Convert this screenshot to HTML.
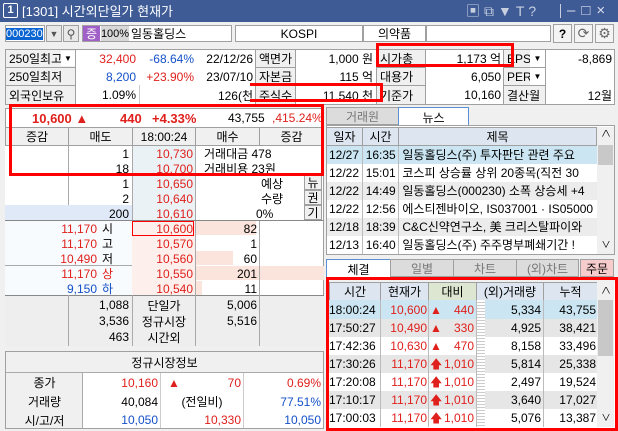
<!DOCTYPE html>
<html><head><meta charset="utf-8"><style>
*{margin:0;padding:0;box-sizing:border-box}
body{width:618px;height:431px;overflow:hidden;background:#f0f0f0;font-family:"Liberation Sans","Noto Sans CJK KR",sans-serif;font-size:12px;color:#000;position:relative}
div{position:absolute}
.c{white-space:nowrap;overflow:hidden;line-height:1}
.r{color:#e0201c}.b{color:#1450c8}
.bx{border:1px solid #a0a0a0}
.red{border:3px solid #f00}
.t{display:flex;align-items:center}
.jr{justify-content:flex-end;padding-right:3px}
.jc{justify-content:center}
.jl{justify-content:flex-start;padding-left:3px}
</style></head><body>
<!-- title -->
<div style="left:0;top:0;width:618px;height:22px;background:#3e5b96"></div>
<div style="left:3px;top:3px;width:15px;height:15px;border:1px solid #fff;border-radius:2px;color:#fff;font-size:11px;text-align:center;line-height:13px;font-weight:bold">1</div>
<div class="c" style="left:22px;top:5px;color:#fff;font-size:13px">[1301] 시간외단일가 현재가</div>
<div class="c" style="left:466px;top:4px;color:#c8d0e0;font-size:14px;letter-spacing:4px">▣⧉▼T?</div>
<div style="left:560px;top:4px;width:1px;height:14px;background:#c8d0e0"></div>
<div class="c" style="left:567px;top:3px;color:#dde;font-size:15px;letter-spacing:6px">–□×</div>
<!-- toolbar -->
<div class="bx t" style="left:5px;top:25px;width:40px;height:17px;background:#fff"><span style="background:#0a64d2;color:#fff;font-size:11px">000230</span></div>
<div class="bx t jc" style="left:46px;top:25px;width:16px;height:17px;background:#e8e8e8;font-size:9px;color:#555">▼</div>
<div class="bx t jc" style="left:63px;top:25px;width:16px;height:17px;background:#e8e8e8;color:#555">⚲</div>
<div class="bx" style="left:82px;top:25px;width:150px;height:17px;background:#fff"></div>
<div class="t jc" style="left:83px;top:26px;width:17px;height:15px;background:#a060c8;color:#fff">증</div>
<div class="t jc" style="left:101px;top:26px;width:28px;height:15px;background:#d8d8d8;font-size:11px">100%</div>
<div class="c" style="left:131px;top:28px">일동홀딩스</div>
<div class="bx t jc" style="left:235px;top:25px;width:128px;height:17px;background:#fff">KOSPI</div>
<div class="bx t jc" style="left:363px;top:25px;width:63px;height:17px;background:#fff">의약품</div>
<div class="bx" style="left:426px;top:25px;width:125px;height:17px;background:#fff"></div>
<div class="bx t jc" style="left:553px;top:24px;width:19px;height:19px;background:#f4f4f4;font-weight:bold">?</div>
<div class="bx t jc" style="left:574px;top:24px;width:19px;height:19px;background:#f4f4f4;color:#666;font-size:14px">⟳</div>
<div class="bx t jc" style="left:595px;top:24px;width:19px;height:19px;background:#f4f4f4;color:#666;font-size:14px">⚙</div>
<!-- info table -->
<div class="bx" style="left:5px;top:49px;width:610px;height:56px;background:#fff"></div>
<div class="bx t jl" style="left:5px;top:49px;width:71px;height:19px;background:#f0f0f0">250일최고</div>
<div class="t jc" style="left:61px;top:51px;width:14px;height:15px;background:#fff;font-size:8px">▼</div>
<div class="bx t jl" style="left:5px;top:67px;width:71px;height:19px;background:#f0f0f0">250일최저</div>
<div class="bx t jl" style="left:5px;top:85px;width:71px;height:20px;background:#f0f0f0">외국인보유</div>
<div class="t jr r" style="left:75px;top:49px;width:64px;height:19px">32,400</div>
<div class="t jr b" style="left:139px;top:49px;width:58px;height:19px">-68.64%</div>
<div class="t jr" style="left:197px;top:49px;width:59px;height:19px">22/12/26</div>
<div class="t jr b" style="left:75px;top:67px;width:64px;height:19px">8,200</div>
<div class="t jr r" style="left:139px;top:67px;width:58px;height:19px">+23.90%</div>
<div class="t jr" style="left:197px;top:67px;width:59px;height:19px">23/07/10</div>
<div class="t jr" style="left:75px;top:85px;width:64px;height:20px">1.09%</div>
<div style="left:139px;top:85px;width:1px;height:20px;background:#ccc"></div>
<div class="t jr" style="left:140px;top:85px;width:116px;height:20px">126(천</div>
<div class="bx t jl" style="left:255px;top:49px;width:41px;height:19px;background:#f0f0f0">액면가</div>
<div class="bx t jl" style="left:255px;top:67px;width:41px;height:19px;background:#f0f0f0">자본금</div>
<div class="bx t jl" style="left:255px;top:85px;width:41px;height:20px;background:#f0f0f0">주식수</div>
<div class="t jr" style="left:296px;top:49px;width:80px;height:19px">1,000 원</div>
<div class="t jr" style="left:296px;top:67px;width:80px;height:19px">115 억</div>
<div class="t jr" style="left:296px;top:85px;width:80px;height:20px">11,540 천</div>
<div class="bx t jl" style="left:376px;top:49px;width:50px;height:19px;background:#f0f0f0">시가총</div>
<div class="bx t jl" style="left:376px;top:67px;width:50px;height:19px;background:#f0f0f0">대용가</div>
<div class="bx t jl" style="left:376px;top:85px;width:50px;height:20px;background:#f0f0f0">기준가</div>
<div class="t jr" style="left:426px;top:49px;width:78px;height:19px">1,173 억</div>
<div class="t jr" style="left:426px;top:67px;width:78px;height:19px">6,050</div>
<div class="t jr" style="left:426px;top:85px;width:78px;height:20px">10,160</div>
<div class="bx t jl" style="left:503px;top:49px;width:43px;height:19px;background:#f0f0f0">EPS</div>
<div class="bx t jl" style="left:503px;top:67px;width:43px;height:19px;background:#f0f0f0">PER</div>
<div class="bx t jl" style="left:503px;top:85px;width:43px;height:20px;background:#f0f0f0">결산월</div>
<div class="t jc" style="left:530px;top:50px;width:15px;height:17px;background:#fff;font-size:8px">▼</div>
<div class="t jc" style="left:530px;top:68px;width:15px;height:17px;background:#fff;font-size:8px">▼</div>
<div class="t jr" style="left:545px;top:49px;width:70px;height:19px">-8,869</div>
<div class="t jr" style="left:545px;top:85px;width:70px;height:20px">12월</div>
<div class="red" style="left:376px;top:43px;width:138px;height:24px"></div>
<div class="red" style="left:250px;top:83px;width:133px;height:19px;border-left:none"></div>
<!-- orderbook -->
<div class="bx" style="left:5px;top:108px;width:319px;height:238px;background:#fff"></div>
<div class="c r" style="left:32px;top:112px;font-weight:bold;font-size:13px">10,600 ▲</div>
<div class="c r" style="left:120px;top:112px;font-weight:bold;font-size:13px">440</div>
<div class="c r" style="left:152px;top:112px;font-weight:bold;font-size:13px">+4.33%</div>
<div class="c" style="left:228px;top:112px">43,755</div>
<div class="c r" style="left:272px;top:112px">,415.24%</div>
<div class="bx t jc" style="left:5px;top:127px;width:64px;height:19px;background:#f0f0f0">증감</div>
<div class="bx t jc" style="left:68px;top:127px;width:65px;height:19px;background:#f0f0f0">매도</div>
<div class="bx t jc" style="left:132px;top:127px;width:64px;height:19px;background:#f0f0f0">18:00:24</div>
<div class="bx t jc" style="left:195px;top:127px;width:65px;height:19px;background:#f0f0f0">매수</div>
<div class="bx t jc" style="left:259px;top:127px;width:65px;height:19px;background:#f0f0f0">증감</div>
<div style="left:5px;top:146px;width:127px;height:74px;background:#fff"></div>
<div style="left:68px;top:146px;width:1px;height:74px;background:#aaa"></div>
<div style="left:132px;top:146px;width:63px;height:74px;background:#eaf2f6"></div>
<div style="left:5px;top:205px;width:127px;height:15px;background:#dfe9f7"></div>
<div style="left:132px;top:146px;width:1px;height:149px;background:#aaa"></div>
<div style="left:195px;top:146px;width:1px;height:149px;background:#aaa"></div>
<div class="t jr" style="left:68px;top:146px;width:64px;height:15px">1</div>
<div class="t jr" style="left:68px;top:161px;width:64px;height:15px">18</div>
<div class="t jr" style="left:68px;top:176px;width:64px;height:15px">1</div>
<div class="t jr" style="left:68px;top:191px;width:64px;height:15px">2</div>
<div class="t jr" style="left:68px;top:206px;width:64px;height:15px">200</div>
<div class="t jr r" style="left:132px;top:146px;width:64px;height:15px">10,730</div>
<div class="t jr r" style="left:132px;top:161px;width:64px;height:15px">10,700</div>
<div class="t jr r" style="left:132px;top:176px;width:64px;height:15px">10,650</div>
<div class="t jr r" style="left:132px;top:191px;width:64px;height:15px">10,640</div>
<div class="t jr r" style="left:132px;top:206px;width:64px;height:15px">10,610</div>
<div class="c" style="left:204px;top:148px">거래대금 478</div>
<div class="c" style="left:204px;top:163px">거래비용 23원</div>
<div class="c" style="left:261px;top:178px">예상</div>
<div class="c" style="left:261px;top:193px">수량</div>
<div class="c" style="left:256px;top:208px">0%</div>
<div class="bx t jc" style="left:304px;top:175px;width:18px;height:15px;background:#f0f0f0">뉴</div>
<div class="bx t jc" style="left:304px;top:190px;width:18px;height:15px;background:#f0f0f0">권</div>
<div class="bx t jc" style="left:304px;top:205px;width:18px;height:15px;background:#f0f0f0">기</div>
<div style="left:5px;top:220px;width:319px;height:1px;background:#888"></div>
<div style="left:5px;top:221px;width:127px;height:74px;background:#f8fbfe"></div>
<div style="left:5px;top:265px;width:127px;height:1px;background:#aaa"></div>
<div class="t jr r" style="left:5px;top:221px;width:95px;height:15px">11,170</div><div class="c" style="left:102px;top:223px">시</div>
<div class="t jr r" style="left:5px;top:236px;width:95px;height:15px">11,170</div><div class="c" style="left:102px;top:238px">고</div>
<div class="t jr r" style="left:5px;top:251px;width:95px;height:15px">10,490</div><div class="c" style="left:102px;top:253px">저</div>
<div class="t jr r" style="left:5px;top:266px;width:95px;height:15px">11,170</div><div class="c r" style="left:102px;top:268px">상</div>
<div class="t jr b" style="left:5px;top:281px;width:95px;height:15px">9,150</div><div class="c b" style="left:102px;top:283px">하</div>
<div style="left:132px;top:221px;width:63px;height:74px;background:#fdf0ec"></div>
<div style="left:196px;top:221px;width:60px;height:14px;background:#fbe4dc"></div>
<div style="left:196px;top:251px;width:37px;height:14px;background:#fbe4dc"></div>
<div style="left:196px;top:266px;width:128px;height:14px;background:#fbe4dc"></div>
<div style="left:196px;top:281px;width:6px;height:14px;background:#fbe4dc"></div>
<div style="left:259px;top:221px;width:1px;height:74px;background:#aaa"></div>
<div style="left:132px;top:221px;width:62px;height:15px;border:1px solid #f00"></div>
<div class="t jr r" style="left:132px;top:221px;width:64px;height:15px">10,600</div>
<div class="t jr r" style="left:132px;top:236px;width:64px;height:15px">10,570</div>
<div class="t jr r" style="left:132px;top:251px;width:64px;height:15px">10,560</div>
<div class="t jr r" style="left:132px;top:266px;width:64px;height:15px">10,550</div>
<div class="t jr r" style="left:132px;top:281px;width:64px;height:15px">10,540</div>
<div class="t jr" style="left:196px;top:221px;width:64px;height:15px">82</div>
<div class="t jr" style="left:196px;top:236px;width:64px;height:15px">1</div>
<div class="t jr" style="left:196px;top:251px;width:64px;height:15px">60</div>
<div class="t jr" style="left:196px;top:266px;width:64px;height:15px">201</div>
<div class="t jr" style="left:196px;top:281px;width:64px;height:15px">11</div>
<div style="left:5px;top:295px;width:319px;height:51px;background:#eeeeee;border-top:1px solid #888"></div>
<div style="left:68px;top:295px;width:1px;height:51px;background:#aaa"></div>
<div style="left:132px;top:295px;width:1px;height:51px;background:#aaa"></div>
<div style="left:195px;top:295px;width:1px;height:51px;background:#aaa"></div>
<div style="left:259px;top:295px;width:1px;height:51px;background:#aaa"></div>
<div class="t jr" style="left:68px;top:297px;width:64px;height:16px">1,088</div>
<div class="t jr" style="left:68px;top:313px;width:64px;height:16px">3,536</div>
<div class="t jr" style="left:68px;top:329px;width:64px;height:16px">463</div>
<div class="t jc" style="left:132px;top:297px;width:64px;height:16px">단일가</div>
<div class="t jc" style="left:132px;top:313px;width:64px;height:16px">정규시장</div>
<div class="t jc" style="left:132px;top:329px;width:64px;height:16px">시간외</div>
<div class="t jr" style="left:196px;top:297px;width:64px;height:16px">5,006</div>
<div class="t jr" style="left:196px;top:313px;width:64px;height:16px">5,516</div>
<div class="red" style="left:9px;top:104px;width:315px;height:72px"></div>
<!-- regular market -->
<div class="bx" style="left:5px;top:351px;width:319px;height:78px;background:#fff"></div>
<div class="t jc" style="left:6px;top:352px;width:317px;height:21px;background:#f0f0f0;border-bottom:1px solid #aaa">정규시장정보</div>
<div class="t jc" style="left:6px;top:373px;width:77px;height:55px;background:#f0f0f0;border-right:1px solid #aaa"></div>
<div class="t jc" style="left:6px;top:373px;width:77px;height:19px">종가</div>
<div class="t jc" style="left:6px;top:392px;width:77px;height:19px">거래량</div>
<div class="t jc" style="left:6px;top:411px;width:77px;height:18px">시/고/저</div>
<div style="left:160px;top:373px;width:1px;height:55px;background:#ccc"></div>
<div style="left:243px;top:373px;width:1px;height:55px;background:#ccc"></div>
<div class="t jr r" style="left:83px;top:373px;width:78px;height:19px">10,160</div>
<div class="c r" style="left:168px;top:377px">▲</div>
<div class="t jr r" style="left:160px;top:373px;width:84px;height:19px">70</div>
<div class="t jr r" style="left:243px;top:373px;width:81px;height:19px">0.69%</div>
<div class="t jr" style="left:83px;top:392px;width:78px;height:19px">40,084</div>
<div class="t jc" style="left:160px;top:392px;width:84px;height:19px">(전일비)</div>
<div class="t jr b" style="left:243px;top:392px;width:81px;height:19px">77.51%</div>
<div class="t jr b" style="left:83px;top:411px;width:78px;height:18px">10,050</div>
<div class="t jr r" style="left:160px;top:411px;width:84px;height:18px">10,330</div>
<div class="t jr b" style="left:243px;top:411px;width:81px;height:18px">10,050</div>
<!-- news -->
<div class="bx t jc" style="left:326px;top:107px;width:73px;height:18px;background:#dcdcdc;color:#777">거래원</div>
<div class="t jc" style="left:398px;top:107px;width:71px;height:19px;background:#fff;border:1px solid #5b8fd0;border-bottom:none">뉴스</div>
<div style="left:326px;top:125px;width:289px;height:130px;background:#fff;border:1px solid #a0a0a0"></div>
<div class="bx t jc" style="left:326px;top:127px;width:37px;height:19px;background:#dde6f0">일자</div>
<div class="bx t jc" style="left:362px;top:127px;width:37px;height:19px;background:#dde6f0">시간</div>
<div class="bx t jc" style="left:398px;top:127px;width:199px;height:19px;background:#dde6f0">제목</div>
<div style="left:597px;top:127px;width:17px;height:127px;background:#f0f0f0"></div>
<div class="c" style="left:601px;top:130px;font-size:10px">∧</div>
<div style="left:598px;top:145px;width:15px;height:20px;background:#c8c8c8"></div>
<div class="c" style="left:601px;top:241px;font-size:10px">∨</div>
<div style="left:327px;top:146px;width:270px;height:18px;background:#cbe6f2"></div>
<div style="left:327px;top:182px;width:270px;height:18px;background:#ececec"></div>
<div style="left:327px;top:218px;width:270px;height:18px;background:#ececec"></div>
<div style="left:362px;top:146px;width:1px;height:108px;background:#bbb"></div>
<div style="left:398px;top:146px;width:1px;height:108px;background:#bbb"></div>
<div class="c" style="left:329px;top:149px;width:268px">12/27 &nbsp;16:35 &nbsp;일동홀딩스(주) 투자판단 관련 주요</div>
<div class="c" style="left:329px;top:167px;width:268px">12/22 &nbsp;15:01 &nbsp;코스피 상승률 상위 20종목(직전 30</div>
<div class="c" style="left:329px;top:185px;width:268px">12/22 &nbsp;14:49 &nbsp;일동홀딩스(000230) 소폭 상승세 +4</div>
<div class="c" style="left:329px;top:203px;width:268px">12/22 &nbsp;12:56 &nbsp;에스티젠바이오, IS037001 · IS05000</div>
<div class="c" style="left:329px;top:221px;width:268px">12/18 &nbsp;18:39 &nbsp;C&amp;C신약연구소, 美 크리스탈파이와</div>
<div class="c" style="left:329px;top:239px;width:268px">12/13 &nbsp;16:40 &nbsp;일동홀딩스(주) 주주명부폐쇄기간 !</div>
<!-- bottom tabs -->
<div class="t jc" style="left:326px;top:259px;width:65px;height:19px;background:#fff;border:1px solid #5b8fd0;border-bottom:none">체결</div>
<div class="bx t jc" style="left:390px;top:259px;width:64px;height:18px;background:#dcdcdc;color:#777">일별</div>
<div class="bx t jc" style="left:453px;top:259px;width:64px;height:18px;background:#dcdcdc;color:#777">차트</div>
<div class="bx t jc" style="left:516px;top:259px;width:63px;height:18px;background:#dcdcdc;color:#777">(외)차트</div>
<div class="bx t jc" style="left:580px;top:259px;width:34px;height:18px;background:#f6cccc">주문</div>
<!-- trade table -->
<div style="left:329px;top:282px;width:286px;height:147px;background:#fff"></div>
<div class="bx t jc" style="left:329px;top:282px;width:52px;height:19px;background:#dde6f0">시간</div>
<div class="bx t jc" style="left:380px;top:282px;width:49px;height:19px;background:#dde6f0">현재가</div>
<div class="bx t jc" style="left:428px;top:282px;width:49px;height:19px;background:#dde6d0">대비</div>
<div class="bx t jc" style="left:476px;top:282px;width:68px;height:19px;background:#dde6f0">(외)거래량</div>
<div class="bx t jc" style="left:543px;top:282px;width:55px;height:19px;background:#dde6f0">누적</div>
<div style="left:597px;top:282px;width:17px;height:145px;background:#f0f0f0"></div>
<div class="c" style="left:601px;top:287px;font-size:10px">∧</div>
<div style="left:598px;top:300px;width:15px;height:56px;background:#c8c8c8"></div>
<div class="c" style="left:601px;top:414px;font-size:10px">∨</div>
<div style="left:329px;top:300px;width:268px;height:19px;background:#cbe6f2"></div>
<div style="left:329px;top:319px;width:268px;height:18px;background:#e6e6e6"></div>
<div style="left:329px;top:355px;width:268px;height:18px;background:#e6e6e6"></div>
<div style="left:329px;top:391px;width:268px;height:18px;background:#e6e6e6"></div>
<div style="left:477px;top:300px;width:8px;height:127px;background:repeating-linear-gradient(#fff 0 2px,#ccc 2px 3px)"></div>
<div style="left:380px;top:300px;width:1px;height:127px;background:#bbb"></div>
<div style="left:428px;top:300px;width:1px;height:127px;background:#bbb"></div>
<div style="left:476px;top:300px;width:1px;height:127px;background:#bbb"></div>
<div style="left:543px;top:300px;width:1px;height:127px;background:#bbb"></div>
<div id="rows"></div>
<div class="c" style="left:329px;top:304px;line-height:18px;top:301px">18:00:24<br>17:50:27<br>17:42:36<br>17:30:26<br>17:20:08<br>17:10:17<br>17:00:03</div>
<div class="c r" style="left:380px;top:301px;width:47px;text-align:right;line-height:18px">10,600<br>10,490<br>10,630<br>11,170<br>11,170<br>11,170<br>11,170</div>
<div class="c r" style="left:430px;top:301px;line-height:18px">▲<br>▲<br>▲<br>🡅<br>🡅<br>🡅<br>🡅</div>
<div class="c r" style="left:428px;top:301px;width:46px;text-align:right;line-height:18px">440<br>330<br>470<br>1,010<br>1,010<br>1,010<br>1,010</div>
<div class="c" style="left:486px;top:301px;width:55px;text-align:right;line-height:18px">5,334<br>4,925<br>8,158<br>5,814<br>2,497<br>3,640<br>5,076</div>
<div class="c" style="left:544px;top:301px;width:52px;text-align:right;line-height:18px">43,755<br>38,421<br>33,496<br>25,338<br>19,524<br>17,027<br>13,387</div>
<div class="red" style="left:326px;top:277px;width:292px;height:154px"></div>
</body></html>
